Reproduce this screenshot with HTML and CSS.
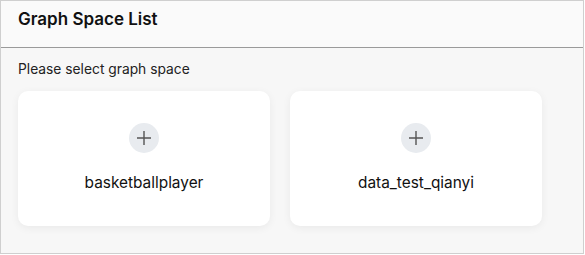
FILE: index.html
```html
<!DOCTYPE html>
<html lang="en">
<head>
  <meta charset="UTF-8" />
  <title>Graph Space List</title>
  <link rel="stylesheet" href="styles.css">
</head>
<body>
  <div class="space-panel">
    <div class="panel-header">Graph Space List</div>
    <div class="panel-body">
      <div class="hint">Please select graph space</div>
      <div class="space-list">
        <div class="space-card">
          <div class="add-icon">
            <svg width="16" height="16" viewBox="0 0 16 16"><path d="M8 1v14M1 8h14" stroke="#555" stroke-width="1.4" fill="none"/></svg>
          </div>
          <div class="space-name">basketballplayer</div>
        </div>
        <div class="space-card">
          <div class="add-icon">
            <svg width="16" height="16" viewBox="0 0 16 16"><path d="M8 1v14M1 8h14" stroke="#555" stroke-width="1.4" fill="none"/></svg>
          </div>
          <div class="space-name">data_test_qianyi</div>
        </div>
      </div>
    </div>
  </div>
</body>
</html>
```

FILE: styles.css
```css
body {
  margin: 0;
  font-family: Inter, 'Liberation Sans', Arial, sans-serif;
  color: #111;
  background: #fff;
}

.space-panel {
  width: 584px;
  height: 254px;
  box-sizing: border-box;
  border: 1px solid #cfcfcf;
  background: #f7f7f7;
}

.panel-header {
  height: 47px;
  box-sizing: border-box;
  padding: 8px 18px 0 17px;
  font-size: 17px;
  line-height: 20px;
  font-weight: 600;
  background: #fafafa;
  border-bottom: 1px solid #9a9a9a;
}

.panel-body {
  padding: 12px 17px 0;
}

.hint {
  font-size: 13.8px;
  line-height: 18px;
  color: #222;
}

.space-list {
  display: flex;
  gap: 20px;
  margin-top: 13px;
}

.space-card {
  width: 252px;
  height: 135px;
  box-sizing: border-box;
  padding-top: 32px;
  background: #fff;
  border-radius: 10px;
  box-shadow: 0 2px 8px rgba(0, 0, 0, 0.06);
  display: flex;
  flex-direction: column;
  align-items: center;
}

.add-icon {
  width: 30px;
  height: 30px;
  border-radius: 50%;
  background: #e8ebef;
  display: flex;
  align-items: center;
  justify-content: center;
}

.space-name {
  margin-top: 20px;
  font-size: 15.4px;
  line-height: 20px;
  color: #111;
}
```
